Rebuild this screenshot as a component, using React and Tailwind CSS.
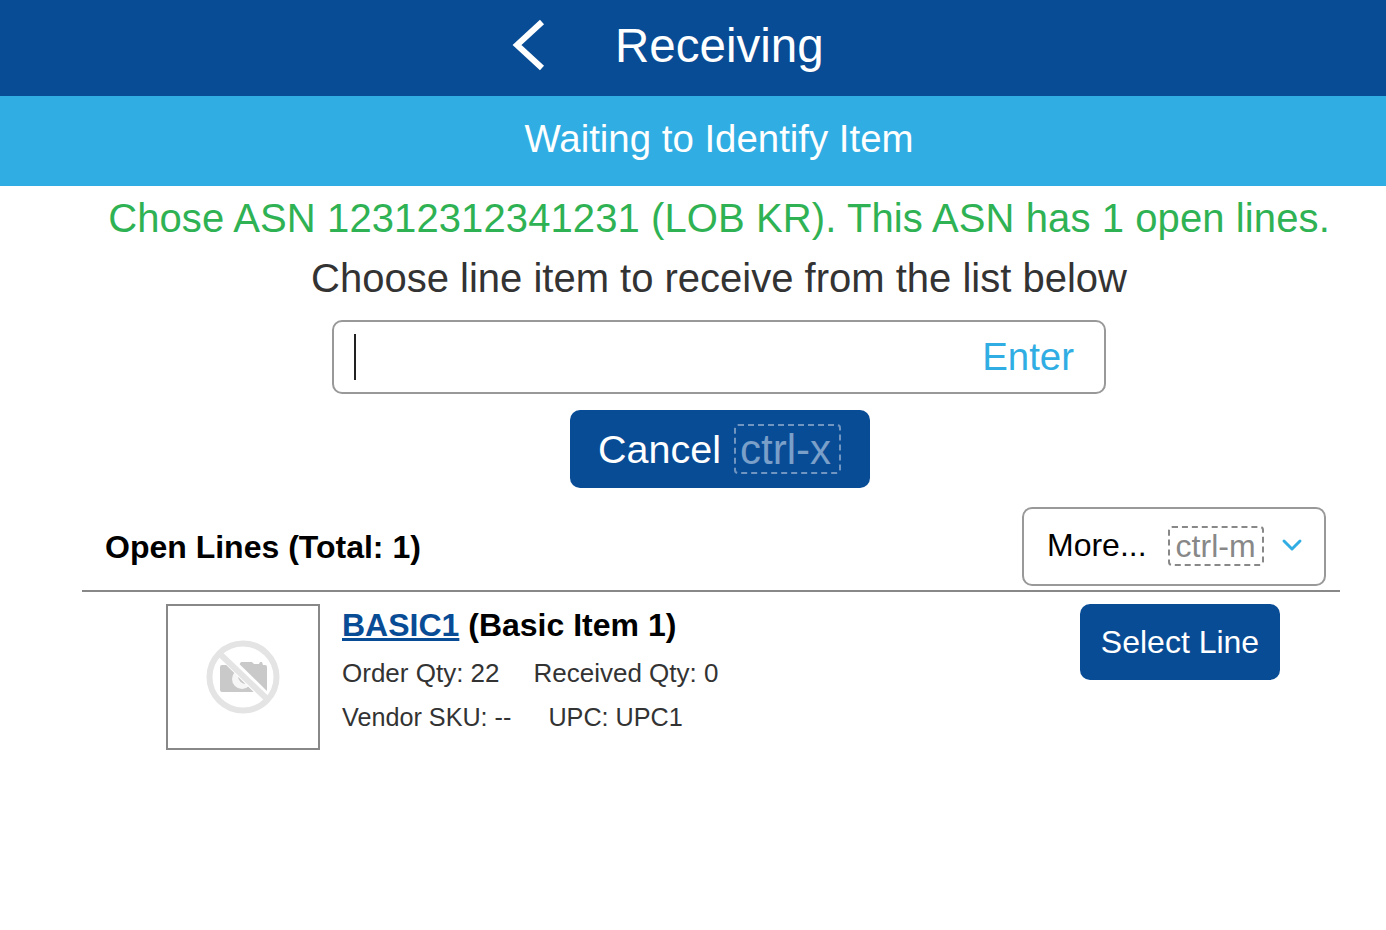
import { ChevronDown } from 'lucide-react'

/* ── Placeholder for items with no photo ── */
function NoPhoto() {
  return (
    <svg width="74" height="74" viewBox="0 0 74 74">
      <path d="M14 27a2 2 0 0 1 2-2h17l2-3h11l2 2h5l1-2h2l1 3h2a2 2 0 0 1 2 2v23a2 2 0 0 1-2 2H16a2 2 0 0 1-2-2V27z" fill="#c9c9c9" />
      <circle cx="36" cy="39" r="10" fill="#f6f6f6" />
      <circle cx="40" cy="36" r="8" fill="#c9c9c9" />
      <line x1="15" y1="13" x2="61" y2="58" stroke="#fff" strokeWidth="10" />
      <line x1="14" y1="14" x2="60" y2="58" stroke="#e4e4e4" strokeWidth="6" />
      <circle cx="37" cy="37" r="33.5" fill="none" stroke="#e4e4e4" strokeWidth="6" />
    </svg>
  )
}

export default function App() {
  return (
    <div className="min-h-[930px] bg-white overflow-hidden">
      {/* the page runs wider than the window, so its centre sits right of the middle */}
      <div className="w-[1438px] text-[40px] text-[#333] font-['Liberation_Sans',Arial,sans-serif]">
        {/* Header */}
        <div className="h-[96px] bg-[#094c96] flex items-center pl-[510px] text-white text-[47.5px]">
          <svg width="36" height="56" viewBox="0 0 36 56" className="mt-[-4px]">
            <polyline points="32,4 7,27 32,50" fill="none" stroke="#fff" strokeWidth="6" />
          </svg>
          <span className="ml-[69px] pb-[4px]">Receiving</span>
        </div>
        <div className="h-[90px] bg-[#30aee3] flex items-center justify-center text-white text-[38.4px]">
          <span className="pb-[4px]">Waiting to Identify Item</span>
        </div>

        {/* Status */}
        <div className="flex flex-col items-center">
          <p className="h-[60px] leading-[64px] text-[#2fb254] tracking-[0.1px]">Chose ASN 12312312341231 (LOB KR). This ASN has 1 open lines.</p>
          <p className="h-[60px] leading-[64px]">Choose line item to receive from the list below</p>

          <div className="mt-[14px] w-[774px] h-[74px] rounded-[10px] border-2 border-[#999] flex items-center justify-between pl-[20px] pr-[30px]">
            <div className="w-[2px] h-[46px] bg-[#222]" />
            <span className="text-[#30aee3] text-[38.4px]">Enter</span>
          </div>

          <button className="ml-[1px] mt-[16px] w-[300px] h-[78px] rounded-[10px] bg-[#094c96] text-white flex items-center justify-center gap-[13px]">
            <span className="text-[39.5px] pt-[1px]">Cancel</span>
            <span className="h-[50px] w-[107px] pr-[4px] text-center text-[42px] leading-[48px] rounded-[4px] border-2 border-dashed border-[#6f95c0] text-[#7a9fc8]">ctrl-x</span>
          </button>
        </div>

        {/* Open lines */}
        <div className="ml-[82px] w-[1258px] mt-[19px]">
          <div className="h-[85px] border-b-2 border-[#888] flex items-start justify-between pl-[23px] pr-[14px]">
            <span className="mt-[20px] text-[32px] font-bold text-black leading-[40px]">Open Lines (Total: 1)</span>
            <div className="w-[304px] h-[79px] rounded-[10px] border-2 border-[#999] flex items-center pl-[23px] text-[32px] text-black">
              <span className="pb-[4px]">More...</span>
              <span className="ml-[21px] mb-[2px] w-[96px] h-[40px] text-center leading-[37px] rounded-[4px] border-2 border-dashed border-[#888] text-[#888]">ctrl-m</span>
              <ChevronDown className="ml-[12px] mb-[3px] text-[#30aee3]" size={32} strokeWidth={2.2} />
            </div>
          </div>

          <div className="flex items-start pt-[12px] pl-[84px]">
            <div className="w-[154px] h-[146px] border-2 border-[#888] flex items-center justify-center">
              <NoPhoto />
            </div>
            <div className="ml-[22px] flex-1">
              <p className="text-[32px] font-bold text-black leading-[42px]">
                <span className="text-[#094c96] underline">BASIC1</span> (Basic Item 1)
              </p>
              <div className="text-[26px] leading-[44px] mt-[5px]">
                <p className="flex gap-[34px]"><span>Order Qty: 22</span><span>Received Qty: 0</span></p>
                <p className="flex gap-[37px] text-[25.2px]"><span>Vendor SKU: --</span><span>UPC: UPC1</span></p>
              </div>
            </div>
            <button className="mr-[60px] w-[200px] h-[76px] rounded-[10px] bg-[#094c96] text-white text-[32px]">Select Line</button>
          </div>
        </div>
      </div>
    </div>
  )
}
